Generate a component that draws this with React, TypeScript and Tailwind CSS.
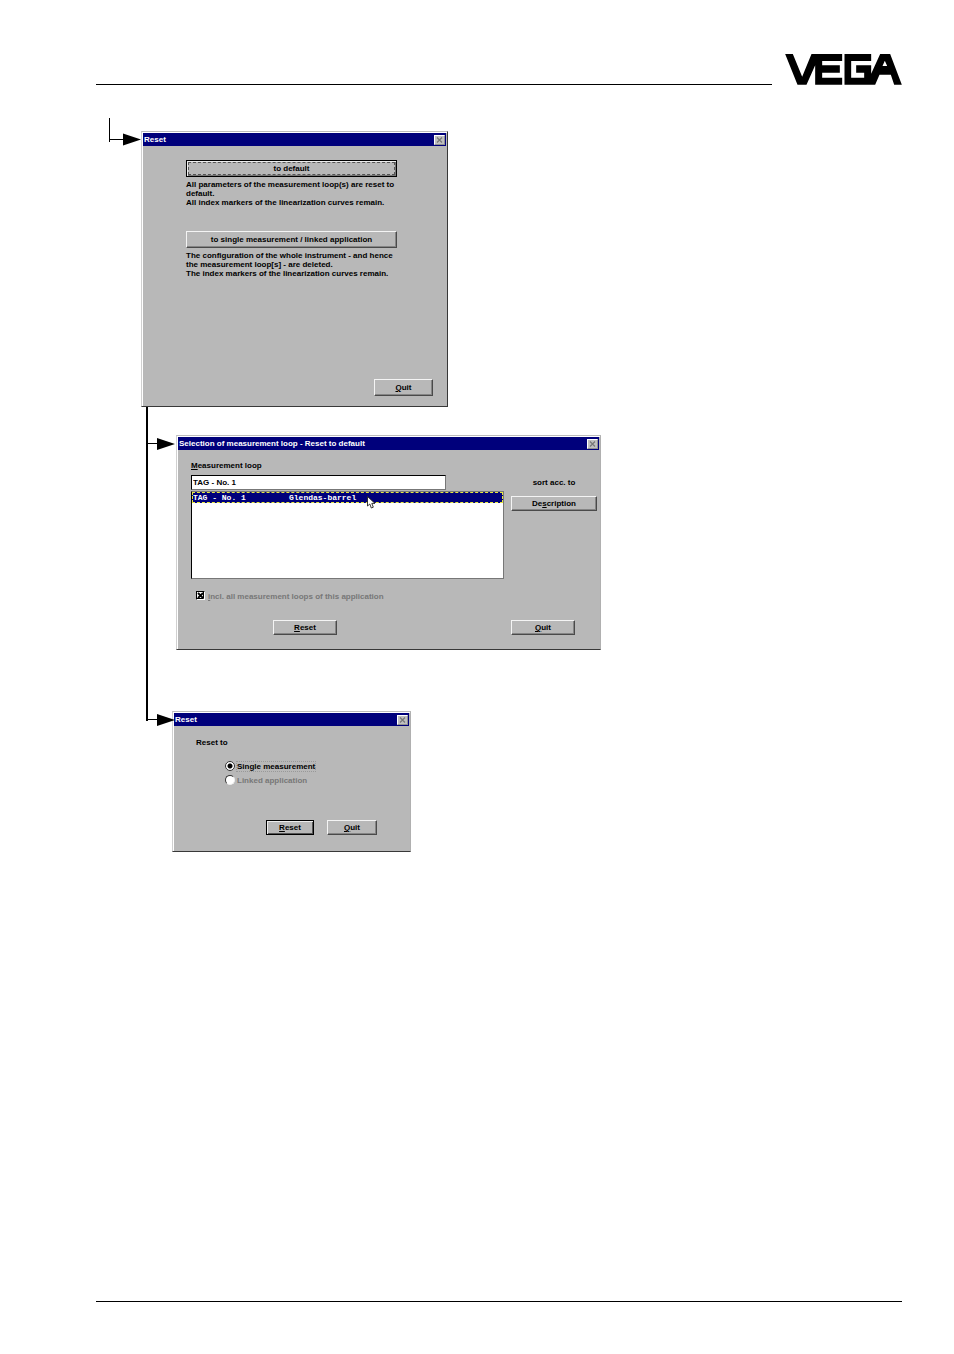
import type { ReactNode } from "react";

const raised =
  "border border-t-[#f4f4f4] border-l-[#f4f4f4] border-r-[#4a4a4a] border-b-[#4a4a4a] shadow-[inset_-1px_-1px_0_#858585]";

function VegaLogo() {
  return (
    <svg className="h-[31px] w-[117px] shrink-0" viewBox="75 42 350 93" role="img" aria-label="VEGA">
      <path
        fillRule="evenodd"
        d="M75 42H98L126 110L154 42H246V63H186V76H239V98H186V113H246V134H165V76L139 134H112ZM253 42H333V63H273V113H312V98H288V76H333V101L360 42H390L425 134H402L392 104H358L345 134H253ZM374 62L367 78H381Z"
      />
    </svg>
  );
}

function EntryArrow() {
  return (
    <svg className="h-7 w-8 shrink-0" viewBox="0 0 32 28" aria-hidden="true">
      <path d="M0 0H1V21H14V22H1V24H0Z" />
      <path d="M14 15.6L32 21.6L14 27.6Z" />
    </svg>
  );
}

function BranchArrow({ className }: { className: string }) {
  return (
    <svg className={`h-3 w-[27px] shrink-0 ${className}`} viewBox="0 0 27 12" aria-hidden="true">
      <path d="M0 5H10V6H0ZM9 0L27 6L9 12Z" />
    </svg>
  );
}

function CloseButton() {
  return (
    <button
      type="button"
      aria-label="Close"
      className="flex h-[10px] w-[11px] items-center justify-center border border-t-white border-l-white border-r-[#909090] border-b-[#909090] bg-[#c0c0c0]"
    >
      <svg className="h-[6px] w-[7px]" viewBox="0 0 7 6" aria-hidden="true">
        <path d="M1 0.5L6 5.5M6 0.5L1 5.5" stroke="#777" strokeWidth="1.2" />
      </svg>
    </button>
  );
}

function Dialog({ title, className, children }: { title: string; className: string; children: ReactNode }) {
  return (
    <section
      aria-label={title}
      className={`shrink-0 border border-t-[#bcbcbc] border-l-[#d0d0d0] border-b-[#383838] bg-[#b8b8b8] shadow-[inset_1px_1px_0_#fff] ${className}`}
    >
      <header className="mt-px mr-px ml-px flex h-[13px] items-center justify-between bg-[#00007b] pr-px pl-px text-white">
        <h2>{title}</h2>
        <CloseButton />
      </header>
      {children}
    </section>
  );
}

function Button({ className, children }: { className: string; children: ReactNode }) {
  return (
    <button type="button" className={`flex items-center justify-center bg-[#b8b8b8] ${className}`}>
      {children}
    </button>
  );
}

function ResetDialog() {
  return (
    <Dialog title="Reset" className="w-[307px] border-r-[#383838]">
      <div className="flex flex-col pt-[14px] pr-[14px] pb-[10px] pl-11">
        <Button className="h-[17px] w-[211px] border border-black p-px shadow-[inset_1px_1px_0_#eee,inset_-1px_-1px_0_#777]">
          <span className="flex h-full w-full items-center justify-center border border-dashed border-[#555]">
            to default
          </span>
        </Button>
        <p className="mt-[3px]">
          All parameters of the measurement loop(s) are reset to
          <br />
          default.
          <br />
          All index markers of the linearization curves remain.
        </p>
        <Button className={`mt-6 h-[17px] w-[211px] ${raised}`}>to single measurement / linked application</Button>
        <p className="mt-[3px]">
          The configuration of the whole instrument - and hence
          <br />
          the measurement loop[s] - are deleted.
          <br />
          The index markers of the linearization curves remain.
        </p>
        <Button className={`mt-[101px] h-[17px] w-[59px] self-end ${raised}`}>
          <span>
            <u>Q</u>uit
          </span>
        </Button>
      </div>
    </Dialog>
  );
}

function Pointer() {
  return (
    <svg className="absolute top-1 left-[175px] h-[13px] w-[9px]" viewBox="0 0 9 13" aria-hidden="true">
      <path
        d="M0.5 0.5V10L2.8 8L4.3 12L6.3 11.2L4.8 7.4H8Z"
        fill="#fff"
        stroke="#222"
        strokeWidth="0.9"
      />
    </svg>
  );
}

function SelectionDialog() {
  return (
    <Dialog title="Selection of measurement loop - Reset to default" className="w-[425px] border-r-[#b0b0b0]">
      <div className="pt-[11px] pr-[3px] pb-[14px] pl-[14px]">
        <div className="flex gap-[7px]">
          <div className="w-[313px]">
            <label htmlFor="loop" className="block">
              <u>M</u>easurement loop
            </label>
            <input
              id="loop"
              type="text"
              defaultValue="TAG - No. 1"
              className="mt-[5px] block h-[15px] w-[255px] border border-t-black border-r-[#777] border-b-[#777] border-l-black bg-white px-px outline-none"
            />
            <ul
              role="listbox"
              aria-label="Measurement loops"
              className="relative mt-px h-[88px] border border-t-[#777] border-r-[#777] border-b-[#777] border-l-black bg-white font-['Liberation_Mono',monospace] font-bold"
            >
              <li
                role="option"
                aria-selected="true"
                className="flex h-[11px] items-center border border-dashed border-[#e8e840] bg-[#00007b] text-white"
              >
                <span className="w-24">TAG - No. 1</span>
                <span>Glendas-barrel</span>
              </li>
              <li role="presentation">
                <Pointer />
              </li>
            </ul>
          </div>
          <div className="flex flex-1 flex-col items-center pt-[17px]">
            <span>sort acc. to</span>
            <Button className={`mt-[9px] h-[15px] w-full ${raised}`}>
              <span>
                De<u>s</u>cription
              </span>
            </Button>
          </div>
        </div>
        <label className="mt-3 ml-[5px] flex items-center gap-[2px] text-[#777]">
          <span className="grid h-[10px] w-[10px]">
            <input
              type="checkbox"
              defaultChecked
              disabled
              className="col-start-1 row-start-1 h-[9px] w-[9px] appearance-none border border-t-black border-r-white border-b-white border-l-black bg-white"
            />
            <svg className="col-start-1 row-start-1 h-[9px] w-[9px]" viewBox="0 0 9 9" aria-hidden="true">
              <path d="M7.5 1V7.5H1" fill="none" stroke="#000" />
              <path d="M2 2L7 7M7 2L2 7" stroke="#000" strokeWidth="1.8" />
            </svg>
          </span>
          <span>
            <u>i</u>ncl. all measurement loops of this application
          </span>
        </label>
        <div className="mt-[19px] mr-[22px] ml-[82px] flex justify-between">
          <Button className={`h-[15px] w-16 ${raised}`}>
            <span>
              <u>R</u>eset
            </span>
          </Button>
          <Button className={`h-[15px] w-16 ${raised}`}>
            <span>
              <u>Q</u>uit
            </span>
          </Button>
        </div>
      </div>
    </Dialog>
  );
}

function Radio({ label, checked, disabled }: { label: string; checked?: boolean; disabled?: boolean }) {
  return (
    <label className={`flex h-[14px] items-center gap-px ${disabled ? "text-[#777]" : "text-black"}`}>
      <input
        type="radio"
        name="reset-to"
        defaultChecked={checked}
        disabled={disabled}
        className="h-[10px] w-[10px] appearance-none rounded-full border border-t-[#333] border-r-[#eee] border-b-[#eee] border-l-[#333] bg-white checked:border-[#333] checked:bg-[radial-gradient(circle,#000_0_2px,#fff_3px)]"
      />
      <span className={checked ? "border border-dotted border-[#999]" : "border border-transparent"}>{label}</span>
    </label>
  );
}

function ResetToDialog() {
  return (
    <Dialog title="Reset" className="w-[239px] border-r-[#b0b0b0]">
      <fieldset className="pt-3 pl-[23px]">
        <legend className="float-left">Reset to</legend>
        <div className="clear-both ml-[29px] pt-3">
          <Radio label="Single measurement" checked />
          <Radio label="Linked application" disabled />
        </div>
      </fieldset>
      <div className="mt-[33px] mb-4 ml-[93px] flex gap-[13px]">
        <Button className="h-[15px] w-12 border border-black shadow-[inset_1px_1px_0_#eee,inset_-1px_-1px_0_#555]">
          <span>
            <u>R</u>eset
          </span>
        </Button>
        <Button className={`h-[15px] w-[50px] ${raised}`}>
          <span>
            <u>Q</u>uit
          </span>
        </Button>
      </div>
    </Dialog>
  );
}

export default function App() {
  return (
    <div className="flex min-h-screen flex-col bg-white pt-[54px] pb-[52px] font-['Liberation_Sans',Arial,sans-serif] text-[8px] leading-[9px] font-bold text-black">
      <header className="mr-[52px] ml-24 flex items-end gap-[13px]">
        <div className="flex-1 border-b border-black" />
        <VegaLogo />
      </header>

      <main>
        <div className="mt-[33px] ml-[109px] flex items-start">
          <EntryArrow />
          <div className="mt-[13px]">
            <ResetDialog />
          </div>
        </div>
        <div className="ml-[146px] flex items-start">
          <div className="h-[314px] w-[2px] bg-black" />
          <div className="flex flex-col pt-7">
            <div className="flex items-start">
              <BranchArrow className="mt-[3px] mr-px" />
              <SelectionDialog />
            </div>
            <div className="mt-[61px] flex items-start">
              <BranchArrow className="z-10 mt-[3px] -mr-[3px]" />
              <ResetToDialog />
            </div>
          </div>
        </div>
      </main>

      <footer className="mt-auto mr-[52px] ml-24 border-t border-black" />
    </div>
  );
}
